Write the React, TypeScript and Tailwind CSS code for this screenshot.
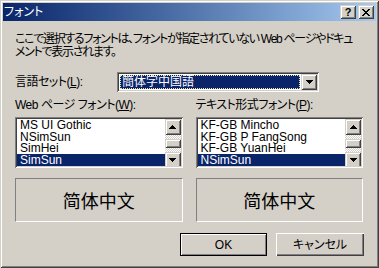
import React from "react";

const SUNKEN =
  "shadow-[inset_1px_1px_#808080,inset_-1px_-1px_#ffffff,inset_2px_2px_#404040,inset_-2px_-2px_#d4d0c8]";
const RAISED_SMALL =
  "shadow-[inset_1px_1px_#d4d0c8,inset_-1px_-1px_#404040,inset_2px_2px_#ffffff,inset_-2px_-2px_#808080]";

function DownArrow() {
  return (
    <svg width="7" height="4" viewBox="0 0 7 4" shapeRendering="crispEdges">
      <path d="M0 0h7v1H0zM1 1h5v1H1zM2 2h3v1H2zM3 3h1v1H3z" fill="#000" />
    </svg>
  );
}

function UpArrow() {
  return (
    <svg width="7" height="4" viewBox="0 0 7 4" shapeRendering="crispEdges">
      <path d="M3 0h1v1H3zM2 1h3v1H2zM1 2h5v1H1zM0 3h7v1H0z" fill="#000" />
    </svg>
  );
}

function Scrollbar() {
  return (
    <div className="w-[16px] flex flex-col shrink-0 overflow-hidden">
      <div className={`h-[16px] shrink-0 bg-[#d4d0c8] flex items-center justify-center ${RAISED_SMALL}`}>
        <UpArrow />
      </div>
      <div className="h-[4px] shrink-0 bg-[repeating-conic-gradient(#ffffff_0_25%,#d4d0c8_0_50%)] bg-[length:2px_2px]" />
      <div className={`h-[9px] shrink-0 bg-[#d4d0c8] ${RAISED_SMALL}`} />
      <div className="h-[4px] shrink-0 bg-[repeating-conic-gradient(#ffffff_0_25%,#d4d0c8_0_50%)] bg-[length:2px_2px]" />
      <div className={`h-[16px] shrink-0 bg-[#d4d0c8] flex items-center justify-center ${RAISED_SMALL}`}>
        <DownArrow />
      </div>
    </div>
  );
}

function rowClass(i: number, selected: number) {
  const sel = i === selected;
  if (i === 2) {
    return sel
      ? "h-[11px] shrink-0 leading-[11px] pl-[3px] bg-[#0a246a] text-white whitespace-nowrap"
      : "h-[11px] shrink-0 leading-[11px] pl-[3px] whitespace-nowrap";
  }
  return sel
    ? "h-[12px] shrink-0 leading-[12px] pl-[3px] bg-[#0a246a] text-white whitespace-nowrap"
    : "h-[12px] shrink-0 leading-[12px] pl-[3px] whitespace-nowrap";
}

function ListBox({ items, selected }: { items: string[]; selected: number }) {
  return (
    <div className={`mt-[5px] h-[51px] bg-white flex p-[2px] ${SUNKEN}`}>
      <div className="flex-1 flex flex-col overflow-hidden">
        {items.map((it, i) => (
          <div key={it} className={rowClass(i, selected)}>
            {it}
          </div>
        ))}
      </div>
      <Scrollbar />
    </div>
  );
}

function Preview() {
  return (
    <div className="mt-[10px] h-[44px] border border-t-[#808080] border-l-[#808080] border-b-white border-r-white flex items-center justify-center text-[18px] font-['Noto_Sans_CJK_SC',sans-serif]">
      简体中文
    </div>
  );
}

export default function App() {
  return (
    <div className="w-[379px] h-[268px] bg-[#d4d0c8] overflow-hidden p-[3px] flex flex-col text-[12px] text-black font-['Liberation_Sans','Noto_Sans_CJK_JP',sans-serif] [font-feature-settings:'palt'] shadow-[inset_1px_1px_#d4d0c8,inset_-1px_-1px_#404040,inset_2px_2px_#ffffff,inset_-2px_-2px_#808080]">
      {/* Title bar */}
      <div className="h-[18px] shrink-0 bg-linear-to-r from-[#0a246a] to-[#a6caf0] flex items-center pl-[1px]">
        <span className="text-white leading-[13px]">フォント</span>
        <div className="ml-auto mr-[2px] flex gap-[2px]">
          <div className={`w-[16px] h-[14px] bg-[#d4d0c8] flex items-center justify-center ${RAISED_SMALL}`}>
            <span className="font-['Liberation_Sans',sans-serif] font-bold text-[11px] leading-[11px]">?</span>
          </div>
          <div className={`w-[16px] h-[14px] bg-[#d4d0c8] flex items-center justify-center ${RAISED_SMALL}`}>
            <svg width="8" height="7" viewBox="0 0 8 7" shapeRendering="crispEdges">
              <path
                d="M0 0h2v1H0zM6 0h2v1H6zM1 1h2v1H1zM5 1h2v1H5zM2 2h4v1H2zM3 3h2v1H3zM2 4h4v1H2zM1 5h2v1H1zM5 5h2v1H5zM0 6h2v1H0zM6 6h2v1H6z"
                fill="#000"
              />
            </svg>
          </div>
        </div>
      </div>

      {/* Content */}
      <div className="flex flex-col pl-[12px] pr-[13px]">
        <div className="mt-[12px] leading-[13px] whitespace-nowrap tracking-[-1.3px]">
          <div>ここで選択するフォントは、フォントが指定されていない Web ページやドキュ</div>
          <div>メントで表示されます。</div>
        </div>

        <div className="mt-[13px] flex items-center h-[20px]">
          <div className="w-[102px] shrink-0 tracking-[-0.5px]">
            言語セット(<span className="underline">L</span>):
          </div>
          <div className={`w-[202px] h-[20px] bg-white flex p-[2px] ${SUNKEN}`}>
            <div className="flex-1 m-[1px] bg-[#0a246a] text-white border border-dotted border-[#e8e8a0] leading-[12px] pl-[1px] flex items-center">
              簡体字中国語
            </div>
            <div className={`w-[16px] shrink-0 bg-[#d4d0c8] flex items-center justify-center ${RAISED_SMALL}`}>
              <DownArrow />
            </div>
          </div>
        </div>

        <div className="mt-[7px] flex gap-[13px]">
          <div className="w-[168px] flex flex-col">
            <div className="leading-[13px] whitespace-nowrap tracking-[-0.5px]">
              Web ページ フォント(<span className="underline">W</span>):
            </div>
            <ListBox items={["MS UI Gothic", "NSimSun", "SimHei", "SimSun"]} selected={3} />
            <Preview />
          </div>
          <div className="w-[168px] flex flex-col">
            <div className="leading-[13px] whitespace-nowrap tracking-[-0.5px]">
              テキスト形式フォント(<span className="underline">P</span>):
            </div>
            <ListBox
              items={["KF-GB Mincho", "KF-GB P FangSong", "KF-GB YuanHei", "NSimSun"]}
              selected={3}
            />
            <Preview />
          </div>
        </div>

        <div className="mt-[11px] flex justify-end gap-[9px] mr-[-1px]">
          <div className="w-[87px] h-[23px] border border-black">
            <div className="h-full flex items-center justify-center shadow-[inset_1px_1px_#ffffff,inset_-1px_-1px_#808080]">
              OK
            </div>
          </div>
          <div className="w-[88px] h-[23px] flex items-center justify-center shadow-[inset_1px_1px_#ffffff,inset_-1px_-1px_#404040,inset_-2px_-2px_#808080]">
            キャンセル
          </div>
        </div>
      </div>
    </div>
  );
}
